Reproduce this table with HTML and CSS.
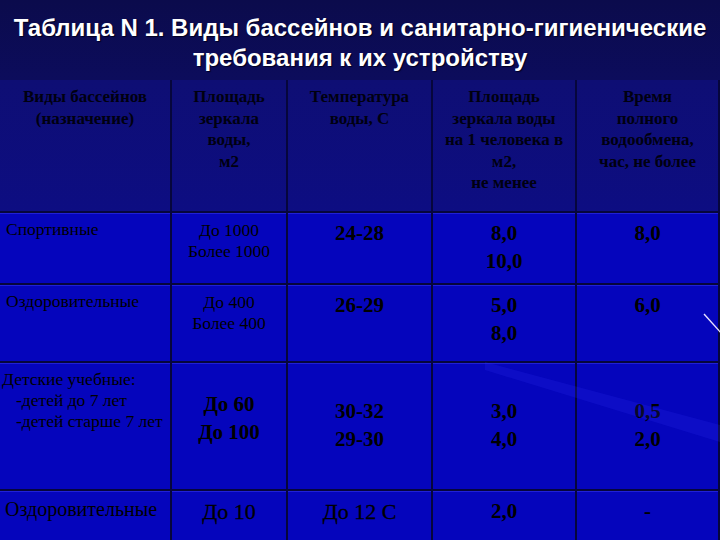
FILE: index.html
```html
<!DOCTYPE html>
<html lang="ru">
<head>
<meta charset="utf-8">
<link rel="stylesheet" href="styles.css">
</head>
<body>
<div class="slide">
  <h1 class="title">Таблица N 1. Виды бассейнов и санитарно-гигиенические<br>требования к их устройству</h1>
  <div class="table">
    <div class="cell head">Виды бассейнов<br>(назначение)</div>
    <div class="cell head">Площадь<br>зеркала<br>воды,<br>м2</div>
    <div class="cell head">Температура<br>воды, С</div>
    <div class="cell head">Площадь<br>зеркала воды<br>на 1 человека в<br>м2,<br>не менее</div>
    <div class="cell head">Время<br>полного<br>водообмена,<br>час, не более</div>

    <div class="cell name">Спортивные</div>
    <div class="cell small">До 1000<br>Более 1000</div>
    <div class="cell big">24-28</div>
    <div class="cell big">8,0<br>10,0</div>
    <div class="cell big">8,0</div>

    <div class="cell name">Оздоровительные</div>
    <div class="cell small">До 400<br>Более 400</div>
    <div class="cell big">26-29</div>
    <div class="cell big">5,0<br>8,0</div>
    <div class="cell big">6,0</div>

    <div class="cell name kids">Детские учебные:<br><span class="ind">-детей до 7 лет</span><br><span class="ind">-детей старше 7 лет</span></div>
    <div class="cell big mid">До 60<br>До 100</div>
    <div class="cell big low">30-32<br>29-30</div>
    <div class="cell big low">3,0<br>4,0</div>
    <div class="cell big low">0,5<br>2,0</div>

    <div class="cell name last">Оздоровительные</div>
    <div class="cell plain">До 10</div>
    <div class="cell plain">До 12 С</div>
    <div class="cell big">2,0</div>
    <div class="cell big">-</div>
  </div>
  <svg class="streak" width="720" height="540" viewBox="0 0 720 540">
    <line x1="704" y1="314" x2="722" y2="334" stroke="#e8e0ff" stroke-width="1.4"/>
    <path d="M485 362 L720 425 L720 442 L485 370 Z" fill="#3a3aff" opacity="0.16"/>
  </svg>
</div>
</body>
</html>
```

FILE: styles.css
```css
html, body {
  margin: 0;
  padding: 0;
}
body {
  width: 720px;
  height: 540px;
  overflow: hidden;
  background: #0b0b52;
}
.slide {
  position: relative;
  width: 720px;
  height: 540px;
  background: linear-gradient(180deg, #0b0b4c 0px, #0c0c5c 80px, #0c0c78 200px, #0606b8 215px, #0404c2 540px);
}
.title {
  margin: 0;
  padding: 13px 0 0 0;
  height: 66px;
  box-sizing: border-box;
  text-align: center;
  color: #ffffff;
  font-family: "Liberation Sans", Arial, sans-serif;
  font-weight: bold;
  font-size: 24px;
  line-height: 30px;
  text-shadow: 1px 1px 1px #000020;
}
.table {
  display: grid;
  grid-template-columns: 172px 116px 145px 144px 143px;
  grid-template-rows: 133px 72px 78px 128px 60px;
  margin-top: 14px;
  font-family: "Liberation Serif", "Times New Roman", serif;
  color: #000000;
}
.cell {
  border-right: 2px solid #06063c;
  border-bottom: 2px solid #06063c;
  box-shadow: inset 0 1px 0 #2020d8;
  background: #0505bc;
  text-align: center;
  box-sizing: border-box;
  font-family: "Liberation Serif", "Times New Roman", serif;
}
.head {
  background: linear-gradient(180deg, #0e0e74, #0d0d82);
  box-shadow: none;
  font-size: 17px;
  font-weight: bold;
  line-height: 21.5px;
  padding-top: 6px;
  color: #000010;
}
.name {
  text-align: left;
  padding: 6px 0 0 6px;
  font-size: 17.5px;
  line-height: 21px;
}
.small {
  font-size: 17.5px;
  line-height: 21px;
  padding-top: 7px;
}
.big {
  font-size: 21px;
  font-weight: bold;
  line-height: 28px;
  padding-top: 6px;
}
.mid {
  padding-top: 27px;
  font-size: 21px;
}
.low {
  padding-top: 34px;
}
.kids {
  line-height: 21px;
  padding-top: 6px;
  padding-left: 2px;
}
.ind {
  padding-left: 14px;
}
.last {
  font-size: 20px;
  padding-top: 8px;
  padding-left: 5px;
}
.plain {
  font-size: 22px;
  line-height: 28px;
  padding-top: 7px;
  -webkit-text-stroke: 0.3px #000000;
}
.streak {
  position: absolute;
  left: 0;
  top: 0;
  pointer-events: none;
}
```
